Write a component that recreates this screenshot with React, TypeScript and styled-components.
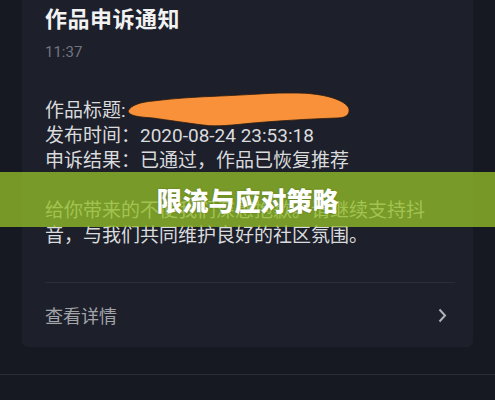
import React from "react";
import styled, { createGlobalStyle } from "styled-components";

const GlobalStyle = createGlobalStyle`
  html, body {
    margin: 0;
    padding: 0;
    background: #161821;
  }
  body {
    font-family: Roboto, "Noto Sans CJK SC", sans-serif;
  }
`;

const Screen = styled.div`
  position: relative;
  width: 495px;
  height: 400px;
  overflow: hidden;
  background: #171922;
`;

const CardArea = styled.div`
  padding: 0 22px;
  height: 375px;
  border-bottom: 1px solid #2a2d37;
  box-sizing: border-box;
`;

const Card = styled.div`
  width: 451px;
  height: 347px;
  box-sizing: border-box;
  padding: 5px 18px 0 23px;
  background: #1d202b;
  border-radius: 0 0 6px 6px;
  display: flex;
  flex-direction: column;
`;

const Title = styled.div`
  font-size: 22px;
  line-height: 30px;
  font-weight: 700;
  color: #f2f2f2;
  letter-spacing: 0.5px;
`;

const Time = styled.div`
  margin-top: 7px;
  font-size: 15px;
  line-height: 20px;
  color: #71757f;
`;

const Body = styled.div`
  margin-top: 36px;
  font-size: 19px;
  line-height: 25px;
  color: #dadbdd;
`;

const Paragraph = styled.p<{ $gap?: number }>`
  margin: ${({ $gap }) => $gap || 0}px 0 0;
`;

// orange marker scribble hiding the title
const Scribble = styled.svg`
  display: inline-block;
  vertical-align: middle;
  margin: -10px 0 -10px 1px;
  position: relative;
  top: -2px;
`;

const Divider = styled.div`
  margin-top: 34px;
  height: 1px;
  background: #2b2e39;
`;

const Footer = styled.div`
  flex: 1;
  display: flex;
  align-items: center;
  justify-content: space-between;
  padding-right: 8px;
  font-size: 18px;
  color: #a2a4aa;
`;

const Chevron = styled.svg`
  display: block;
`;

const Banner = styled.div`
  position: absolute;
  left: 0;
  right: 0;
  top: 172px;
  height: 55px;
  display: flex;
  align-items: center;
  justify-content: center;
  background: rgba(146, 188, 40, 0.78);
  color: #ffffff;
  font-family: "Noto Sans CJK SC", sans-serif;
  font-size: 26px;
  font-weight: 900;
  text-shadow: 0 0 2px rgba(0, 0, 0, 0.25);
`;

export default function App() {
  return (
    <>
      <GlobalStyle />
      <Screen>
        <CardArea>
          <Card>
            <Title>作品申诉通知</Title>
            <Time>11:37</Time>
            <Body>
              <Paragraph>
                作品标题:
                <Scribble width="224" height="36" viewBox="0 0 224 36">
                  <path
                    d="M1 19 C 4 13, 14 10, 26 9 C 50 6, 70 5, 93 4 C 120 3, 140 1, 160 1 C 172 1, 180 1, 186 2 C 205 4, 220 10, 222 17 C 223 23, 218 26, 210 26 C 180 27, 150 29, 126 31 C 105 33, 90 35, 76 33 C 60 31, 40 28, 26 26 C 12 25, 2 24, 1 19 Z"
                    fill="#f8913a"
                    stroke="#2a1a10"
                    strokeWidth="0.8"
                  />
                </Scribble>
              </Paragraph>
              <Paragraph>发布时间：2020-08-24 23:53:18</Paragraph>
              <Paragraph>申诉结果：已通过，作品已恢复推荐</Paragraph>
              <Paragraph $gap={25}>
                给你带来的不便我们深感抱歉。请继续支持抖音，与我们共同维护良好的社区氛围。
              </Paragraph>
            </Body>
            <Divider />
            <Footer>
              <span>查看详情</span>
              <Chevron width="9" height="15" viewBox="0 0 9 15">
                <path d="M1.5 1.5 L7 7.5 L1.5 13.5" fill="none" stroke="#b0b2b8" strokeWidth="2" />
              </Chevron>
            </Footer>
          </Card>
        </CardArea>
        <Banner>限流与应对策略</Banner>
      </Screen>
    </>
  );
}
